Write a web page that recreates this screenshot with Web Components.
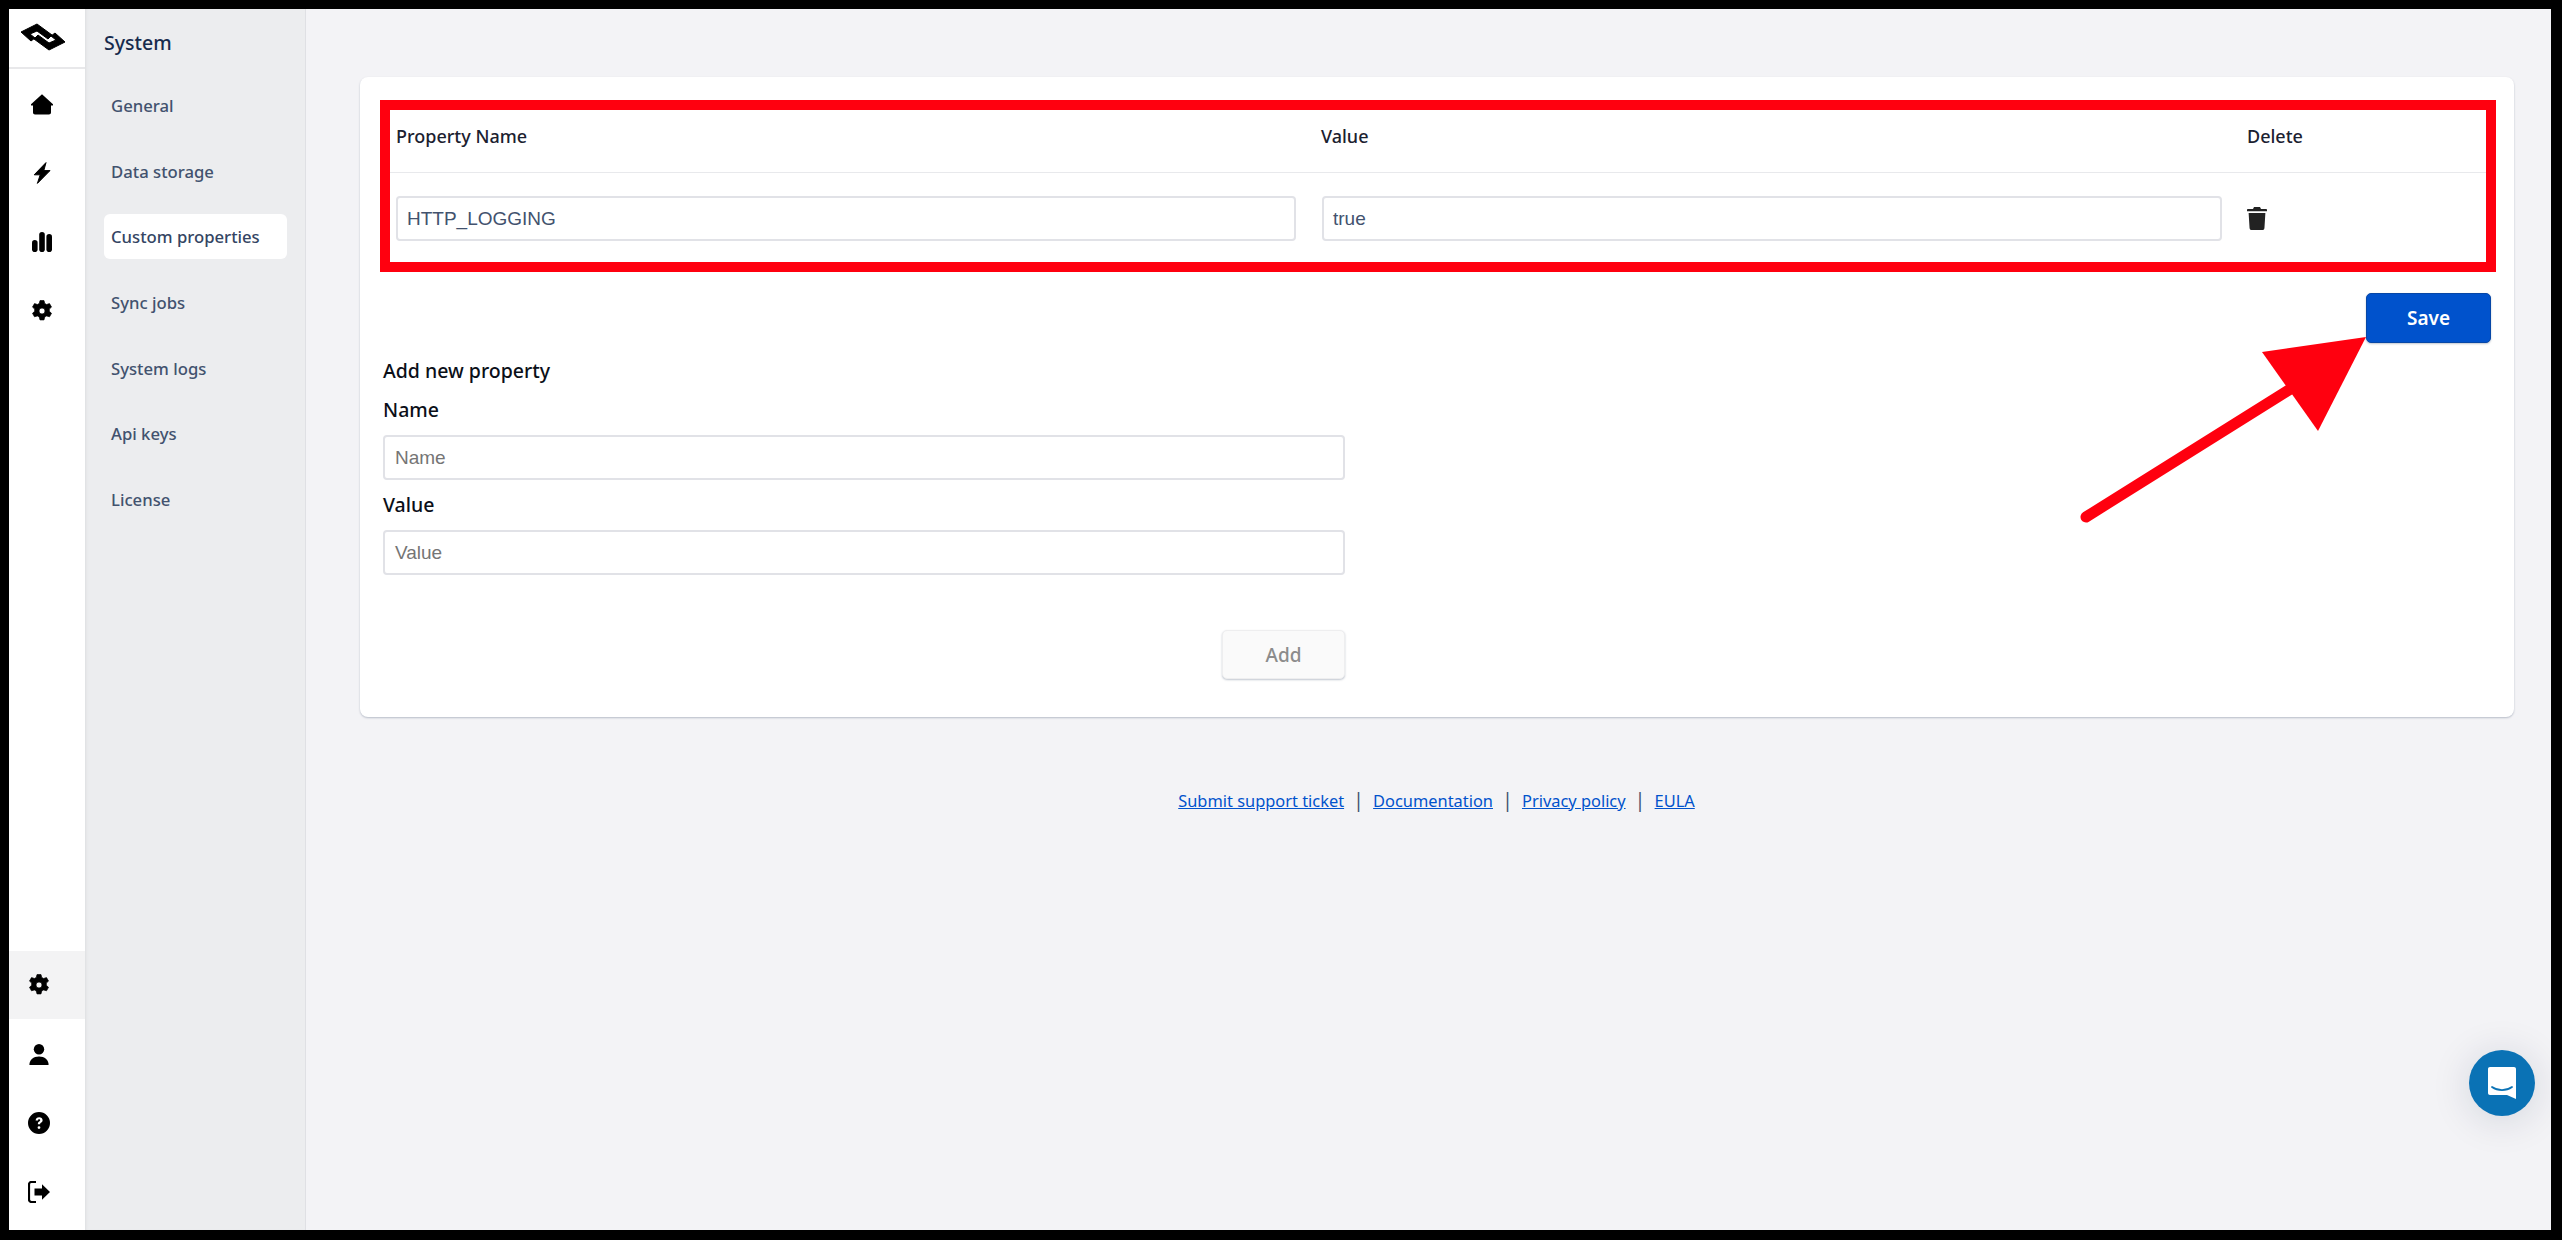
<!DOCTYPE html>
<html lang="en">
<head>
<meta charset="utf-8">
<title>System - Custom properties</title>
<style>
    html, body { margin: 0; height: 100%; }
    body {
        position: relative;
        width: 2562px;
        height: 1240px;
        overflow: hidden;
        background: #000;
        font-family: "Noto Sans", sans-serif;
    }
    .frame {
        display: flex;
        box-sizing: border-box;
        width: 2562px;
        height: 1240px;
        padding: 9px 11px 10px 9px;
    }
</style>
</head>
<body>
<div class="frame">
    <icon-rail></icon-rail>
    <side-nav heading="System">
        <nav-item>General</nav-item>
        <nav-item>Data storage</nav-item>
        <nav-item active>Custom properties</nav-item>
        <nav-item>Sync jobs</nav-item>
        <nav-item>System logs</nav-item>
        <nav-item>Api keys</nav-item>
        <nav-item>License</nav-item>
    </side-nav>
    <main-area>
        <props-card></props-card>
        <footer-links></footer-links>
    </main-area>
</div>
<chat-launcher></chat-launcher>
<red-annotation></red-annotation>

<script>
const ICONS = {
    home: '<path d="M11 1.2 22 11.2c.5.5.2 1.3-.5 1.3H20v7c0 1.1-.9 2-2 2H4c-1.1 0-2-.9-2-2v-7H.5c-.7 0-1-.8-.5-1.3L11 1.2z"/>',
    bolt: '<path stroke="#000" stroke-width="1" stroke-linejoin="round" d="M15 .6 3.200 12.800h6L6.400 21.400 19 8.600h-6.200L15 .6z"/>',
    chart: '<rect x="1" y="9" width="5.6" height="12" rx="2.8"/><rect x="8.2" y="1" width="5.6" height="20" rx="2.8"/><rect x="15.4" y="3" width="5.6" height="18" rx="2.8"/>',
    gear: '<path fill-rule="evenodd" stroke="#000" stroke-width=".7" stroke-linejoin="round" d="M9 .6h4l.7 2.900c.7.2 1.300.6 1.900 1l2.900-.9 2 3.500-2.200 2c.1.7.1 1.500 0 2.200l2.200 2-2 3.500-2.900-.9c-.6.4-1.200.8-1.900 1l-.7 3h-4l-.7-3c-.7-.2-1.300-.6-1.900-1l-2.900.9-2-3.500 2.200-2c-.1-.7-.1-1.500 0-2.200l-2.200-2 2-3.500 2.900.9c.6-.4 1.200-.8 1.900-1L9 .6zM11 8a3 3 0 1 0 0 6 3 3 0 0 0 0-6z"/>',
    user: '<circle cx="11" cy="6.2" r="5.2"/><path d="M1.400 22c0-5.200 4-8.400 9.600-8.400s9.600 3.200 9.600 8.400H1.400z"/>',
    help: '<path fill-rule="evenodd" d="M11 0a11 11 0 1 1 0 22 11 11 0 0 1 0-22zM7.600 8.600h2.300c.1-.8.5-1.300 1.200-1.300.6 0 1.100.4 1.100 1 0 .5-.3.8-1 1.300-1 .7-1.400 1.300-1.300 2.700h2.200c0-.7.2-1 .9-1.500 1-.7 1.600-1.400 1.600-2.600 0-1.900-1.500-3-3.400-3-2.100 0-3.500 1.200-3.600 3.400zM11 14.200a1.400 1.400 0 1 0 0 2.800 1.400 1.400 0 0 0 0-2.800z"/>',
    logout: '<path d="M8 1H3.500C2.100 1 1 2.100 1 3.500v15C1 19.900 2.100 21 3.500 21H8" fill="none" stroke="#000" stroke-width="2.200"/><path d="M14 3.200 22 11l-8 7.800V14.500H6.500v-7H14V3.200z"/>'
};

function icon(name, size) {
    return `<svg width="${size}" height="${size}" viewBox="0 0 22 22" fill="#000" aria-hidden="true">${ICONS[name]}</svg>`;
}

class IconRail extends HTMLElement {
    constructor() {
        super();
        this.attachShadow({ mode: 'open' });
    }

    connectedCallback() {
        const top = ['home', 'bolt', 'chart', 'gear'];
        const bottom = ['user', 'help', 'logout'];
        this.shadowRoot.innerHTML = `
            <style>
                :host {
                    display: flex;
                    flex-direction: column;
                    flex: none;
                    width: 76px;
                    background: #fff;
                }

                .logo {
                    height: 60px;
                    display: flex;
                    align-items: flex-start;
                    justify-content: center;
                    padding: 14px 8px 0 0;
                    box-sizing: border-box;
                    border-bottom: 2px solid #e8e8ea;
                }

                .group {
                    display: flex;
                    flex-direction: column;
                }

                .top {
                    padding: 0 10px 0 0;
                }

                .item {
                    height: 69px;
                    display: flex;
                    align-items: center;
                    justify-content: center;
                }

                .bottom {
                    margin-top: auto;
                    padding-bottom: 4px;
                }

                .bottom .item {
                    padding-right: 16px;
                }

                .bottom .active {
                    height: 68px;
                    background: #f3f3f4;
                }
            </style>
            <div class="logo">
                <svg width="46" height="28" viewBox="0 0 46 28" fill="#000" stroke="#000" stroke-width="1" stroke-linejoin="round" aria-hidden="true">
                    <polygon points="1,9 17,1 32,12 28,16 17,8 10,11 15,15 11,18"/>
                    <polygon points="45,19 29,27 14,16 18,12 29,20 36,17 31,13 35,10"/>
                </svg>
            </div>
            <div class="group top">
                ${top.map(name => `<div class="item">${icon(name, 22)}</div>`).join('')}
            </div>
            <div class="group bottom">
                <div class="item active">${icon('gear', 22)}</div>
                ${bottom.map(name => `<div class="item">${icon(name, 22)}</div>`).join('')}
            </div>
        `;
    }
}

class SideNav extends HTMLElement {
    constructor() {
        super();
        this.attachShadow({ mode: 'open' });
    }

    connectedCallback() {
        this.shadowRoot.innerHTML = `
            <style>
                :host {
                    display: block;
                    flex: none;
                    box-sizing: border-box;
                    width: 221px;
                    padding: 0 18px 0 19px;
                    background: #ecedef;
                    border-right: 1px solid #dfe0e4;
                    box-shadow: inset 3px 0 3px -2px #dcdde0;
                }

                h2 {
                    margin: 0;
                    padding: 20px 0 0;
                    height: 63px;
                    box-sizing: border-box;
                    font-size: 19.5px;
                    line-height: 28px;
                    font-weight: 500;
                    color: #172b4d;
                }

                .items {
                    display: flex;
                    flex-direction: column;
                    gap: 20.7px;
                    padding-top: 11px;
                }
            </style>
            <h2>${this.getAttribute('heading')}</h2>
            <div class="items"><slot></slot></div>
        `;
    }
}

class NavItem extends HTMLElement {
    constructor() {
        super();
        this.attachShadow({ mode: 'open' });
    }

    connectedCallback() {
        this.shadowRoot.innerHTML = `
            <style>
                :host {
                    display: flex;
                    align-items: center;
                    height: 45px;
                    padding-left: 7px;
                    border-radius: 6px;
                    font-size: 16.7px;
                    font-weight: 500;
                    color: #42526e;
                }

                :host([active]) {
                    background: #fff;
                    color: #344563;
                }
            </style>
            <slot></slot>
        `;
    }
}

class MainArea extends HTMLElement {
    constructor() {
        super();
        this.attachShadow({ mode: 'open' });
    }

    connectedCallback() {
        this.shadowRoot.innerHTML = `
            <style>
                :host {
                    display: block;
                    flex: 1;
                    box-sizing: border-box;
                    padding: 68px 37px 0 54px;
                    background: #f3f3f6;
                }
            </style>
            <slot></slot>
        `;
    }
}

class TextField extends HTMLElement {
    constructor() {
        super();
        this.attachShadow({ mode: 'open' });
    }

    connectedCallback() {
        const value = this.getAttribute('value') || '';
        const placeholder = this.getAttribute('placeholder') || '';
        this.shadowRoot.innerHTML = `
            <style>
                :host {
                    display: flex;
                    box-sizing: border-box;
                    height: 45px;
                    align-items: center;
                    padding: 0 10px;
                    background: #fff;
                    border: 2px solid #e1e2e7;
                    border-radius: 4px;
                    font-family: "Liberation Sans", Arial, sans-serif;
                    font-size: 19px;
                    color: #42526e;
                }

                :host([value]) {
                    padding-left: 9px;
                }

                .ph {
                    color: #757575;
                }
            </style>
            ${value ? `<span>${value}</span>` : `<span class="ph">${placeholder}</span>`}
        `;
    }
}

class AppButton extends HTMLElement {
    constructor() {
        super();
        this.attachShadow({ mode: 'open' });
    }

    connectedCallback() {
        this.shadowRoot.innerHTML = `
            <style>
                :host {
                    display: flex;
                    align-items: center;
                    justify-content: center;
                    box-sizing: border-box;
                    width: 125px;
                    height: 50px;
                    border-radius: 5px;
                    background: #0052cc;
                    border: 1px solid #0747a6;
                    box-shadow: 0 1px 2px rgba(9, 30, 66, .25);
                    font-size: 19px;
                    font-weight: 600;
                    color: #fff;
                }

                :host([disabled]) {
                    width: 123px;
                    height: 49px;
                    background: #fafafa;
                    border: 1px solid #eeeeef;
                    color: #8c8c8c;
                    font-weight: 500;
                }
            </style>
            <slot></slot>
        `;
    }
}

class PropsCard extends HTMLElement {
    constructor() {
        super();
        this.attachShadow({ mode: 'open' });
    }

    connectedCallback() {
        this.shadowRoot.innerHTML = `
            <style>
                :host {
                    display: block;
                    box-sizing: border-box;
                    height: 640px;
                    padding: 23px 23px 38px;
                    background: #fff;
                    border-radius: 8px;
                    box-shadow: 0 1px 2px rgba(9, 30, 66, .25);
                    font-size: 18px;
                    color: #1b2130;
                }

                .head, .row {
                    display: grid;
                    grid-template-columns: 900px 900px 1fr;
                    column-gap: 26px;
                    padding-left: 13px;
                    align-items: center;
                }

                .head {
                    height: 72px;
                    border-bottom: 1px solid #e8e9ec;
                    font-weight: 500;
                    line-height: 24px;
                }

                .head span:nth-child(2) {
                    margin-left: -1px;
                }

                .head span:nth-child(3), .trash {
                    margin-left: -1px;
                }

                .row {
                    padding-top: 23px;
                    padding-bottom: 24px;
                }

                .trash {
                    display: block;
                }

                .save {
                    display: flex;
                    justify-content: flex-end;
                    margin-top: 28px;
                }

                form {
                    display: block;
                    width: 962px;
                    margin: 16px 0 0;
                    color: #0b0f18;
                    font-size: 19.5px;
                    font-weight: 500;
                    line-height: 24px;
                }

                .title {
                    margin-bottom: 15px;
                }

                .label {
                    margin-bottom: 13px;
                }

                text-field + .label {
                    margin-top: 13px;
                }

                .add {
                    display: flex;
                    justify-content: flex-end;
                    margin-top: 55px;
                }
            </style>
            <div class="head">
                <span>Property Name</span>
                <span>Value</span>
                <span>Delete</span>
            </div>
            <div class="row">
                <text-field value="HTTP_LOGGING"></text-field>
                <text-field value="true"></text-field>
                <svg class="trash" width="20" height="23" viewBox="0 0 20 23" fill="#222" aria-hidden="true">
                    <path d="M7 0h6l1 2h5.200c.4 0 .8.4.8.8v1.400H0V2.800c0-.4.4-.8.8-.8H6l1-2z"/>
                    <path d="M1.600 6h16.800l-1 15.200c-.1 1-.9 1.800-1.900 1.800h-11c-1 0-1.800-.8-1.900-1.800L1.600 6z"/>
                </svg>
            </div>
            <div class="save"><app-button>Save</app-button></div>
            <form>
                <div class="title">Add new property</div>
                <div class="label">Name</div>
                <text-field placeholder="Name"></text-field>
                <div class="label">Value</div>
                <text-field placeholder="Value"></text-field>
                <div class="add"><app-button disabled>Add</app-button></div>
            </form>
        `;
    }
}

class FooterLinks extends HTMLElement {
    constructor() {
        super();
        this.attachShadow({ mode: 'open' });
    }

    connectedCallback() {
        const links = ['Submit support ticket', 'Documentation', 'Privacy policy', 'EULA'];
        this.shadowRoot.innerHTML = `
            <style>
                :host {
                    display: flex;
                    justify-content: center;
                    align-items: center;
                    margin-top: 71px;
                    height: 24px;
                    padding-right: 1px;
                    font-size: 16.4px;
                    color: #42526e;
                }

                a {
                    color: #0052cc;
                    text-decoration: underline;
                }

                .sep {
                    width: 29px;
                    text-align: center;
                    font-size: 19px;
                }
            </style>
            ${links.map(text => `<a href="#">${text}</a>`).join('<span class="sep">|</span>')}
        `;
    }
}

class ChatLauncher extends HTMLElement {
    constructor() {
        super();
        this.attachShadow({ mode: 'open' });
    }

    connectedCallback() {
        this.shadowRoot.innerHTML = `
            <style>
                :host {
                    position: absolute;
                    left: 2469px;
                    top: 1050px;
                    width: 66px;
                    height: 66px;
                    display: flex;
                    align-items: center;
                    justify-content: center;
                    border-radius: 50%;
                    background: #0a72b5;
                    box-shadow: 0 4px 40px rgba(9, 30, 66, .14);
                }
            </style>
            <svg width="30" height="34" viewBox="0 0 30 34" aria-hidden="true">
                <path fill="#fff" d="M3 1h24c1.200 0 2 .8 2 2v30l-9-4H3c-1.200 0-2-.8-2-2V3c0-1.200.8-2 2-2z"/>
                <path fill="none" stroke="#0a72b5" stroke-width="1.800" stroke-linecap="round" d="M5 21c6 4.200 14 4.200 20 0"/>
            </svg>
        `;
    }
}

class RedAnnotation extends HTMLElement {
    constructor() {
        super();
        this.attachShadow({ mode: 'open' });
    }

    connectedCallback() {
        this.shadowRoot.innerHTML = `
            <style>
                :host {
                    position: absolute;
                    left: 0;
                    top: 0;
                    pointer-events: none;
                }

                svg {
                    display: block;
                }
            </style>
            <svg width="2562" height="1240" viewBox="0 0 2562 1240" aria-hidden="true">
                <rect x="385" y="105" width="2106" height="162" fill="none" stroke="#ff000f" stroke-width="10"/>
                <line x1="2086" y1="517" x2="2292" y2="388" stroke="#ff000f" stroke-width="11" stroke-linecap="round"/>
                <polygon points="2366,337 2262,352 2318,431" fill="#ff000f"/>
            </svg>
        `;
    }
}

customElements.define('icon-rail', IconRail);
customElements.define('side-nav', SideNav);
customElements.define('nav-item', NavItem);
customElements.define('main-area', MainArea);
customElements.define('text-field', TextField);
customElements.define('app-button', AppButton);
customElements.define('props-card', PropsCard);
customElements.define('footer-links', FooterLinks);
customElements.define('chat-launcher', ChatLauncher);
customElements.define('red-annotation', RedAnnotation);
</script>
</body>
</html>
